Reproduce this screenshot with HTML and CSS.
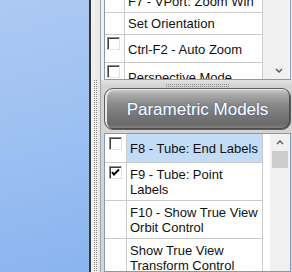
FILE: index.html
```html
<!doctype html>
<html lang="en">
<head>
    <meta charset="utf-8">
    <title>Parametric Models</title>
    <link rel="stylesheet" href="styles.css">
</head>
<body>

<div class="screen">
    <div class="desktop"></div>
    <div class="divider"></div>

    <div class="sash">
        <div class="sash-grip"></div>
    </div>

    <div class="pane">
        <div class="top-section">
            <div class="list list-top">
                <div class="rows rows-scrolled">
                    <div class="row">
                        <div class="cell-check"></div>
                        <div class="cell-text short">F7 - VPort: Zoom Win</div>
                    </div>
                    <div class="row">
                        <div class="cell-check"></div>
                        <div class="cell-text short">Set Orientation</div>
                    </div>
                    <div class="row">
                        <div class="cell-check"><span class="checkbox"></span></div>
                        <div class="cell-text tall">Ctrl-F2 - Auto Zoom</div>
                    </div>
                    <div class="row">
                        <div class="cell-check"><span class="checkbox"></span></div>
                        <div class="cell-text tall">Perspective Mode</div>
                    </div>
                </div>
                <div class="scroll-gap gray"></div>
                <div class="scrollbar scrollbar-end">
                    <div class="scroll-button">
                        <svg viewBox="0 0 8 5" width="8" height="5">
                            <polyline points="1,1 4,4 7,1" fill="none" stroke="#555" stroke-width="1.4"/>
                        </svg>
                    </div>
                </div>
            </div>
        </div>

        <div class="splitter">
            <div class="splitter-grip"></div>
        </div>

        <div class="group">
            <div class="group-header">Parametric Models</div>

            <div class="list list-bottom">
                <div class="rows">
                    <div class="row">
                        <div class="cell-check"><span class="checkbox"></span></div>
                        <div class="cell-text selected">F8 - Tube: End Labels</div>
                    </div>
                    <div class="row">
                        <div class="cell-check">
                            <span class="checkbox">
                                <svg viewBox="0 0 11 11" width="11" height="11">
                                    <polyline points="2,5 4,7.5 9,2.5" fill="none" stroke="#000" stroke-width="2"/>
                                </svg>
                            </span>
                        </div>
                        <div class="cell-text">F9 - Tube: Point Labels</div>
                    </div>
                    <div class="row">
                        <div class="cell-check"></div>
                        <div class="cell-text">F10 - Show True View Orbit Control</div>
                    </div>
                    <div class="row">
                        <div class="cell-check"></div>
                        <div class="cell-text">Show True View Transform Control</div>
                    </div>
                </div>
                <div class="scroll-gap"></div>
                <div class="scrollbar">
                    <div class="scroll-button">
                        <svg viewBox="0 0 8 5" width="8" height="5">
                            <polyline points="1,4 4,1 7,4" fill="none" stroke="#555" stroke-width="1.4"/>
                        </svg>
                    </div>
                    <div class="scroll-thumb"></div>
                </div>
            </div>
        </div>
    </div>
</div>

</body>
</html>
```

FILE: styles.css
```css
body {
    margin: 0;
    font-family: 'Liberation Sans', Arial, sans-serif;
    font-size: 13px;
    line-height: 15px;
    color: #111;
    overflow: hidden;
}

.screen {
    display: flex;
    width: 292px;
    height: 272px;
    overflow: hidden;
}

.desktop {
    width: 89px;
    background: linear-gradient(165deg, #adc9f3 0%, #9cc0f2 50%, #8ab4ef 100%);
}

.divider {
    width: 2px;
    background-color: #353535;
}

/* vertical sash between desktop and side panel */
.sash {
    width: 9px;
    background: linear-gradient(90deg, #f3f3f3, #e6e6e6);
    border-right: 1px solid #a4a4a4;
}

.sash-grip {
    width: 5px;
    height: 200px;
    margin: 80px 0 0 2px;
    background: conic-gradient(#8a8a8a 25%, transparent 0) 0 0 / 2px 2px;
}

.pane {
    flex: 1;
    display: flex;
    flex-direction: column;
    min-width: 0;
}

.top-section {
    padding: 0 1px 0 3px;
    background-color: #f0f0f0;
}

/* lists */
.list {
    display: flex;
    background-color: #fff;
    border: 1px solid #7f9db9;
    overflow: hidden;
    box-sizing: border-box;
}

.list-top {
    height: 80px;
    border-top: 0;
}

.rows {
    display: flex;
    flex-direction: column;
}

.rows-scrolled {
    margin-top: -9px;
}

.row {
    display: flex;
    border-bottom: 1px solid #cbcbcb;
    flex-shrink: 0;
}

.cell-check {
    width: 19px;
    border-right: 1px solid #cbcbcb;
}

.cell-text {
    width: 138px;
    box-sizing: border-box;
    padding: 4px 3px 3px 3px;
    display: flex;
    align-items: center;
    border-right: 1px solid #cbcbcb;
}

.cell-text.short {
    height: 21px;
    padding-top: 2px;
}

.cell-text.tall {
    height: 27px;
}

.checkbox {
    display: block;
    width: 13px;
    height: 13px;
    margin: 2px 0 0 2px;
    box-sizing: border-box;
    background-color: #fff;
    border: 1px solid;
    border-color: #8d8d8d #e2e2e2 #e2e2e2 #8d8d8d;
    box-shadow: inset 1px 1px 0 #404040;
    font-size: 0;
}

.checkbox svg {
    display: block;
}

.scroll-gap {
    width: 6px;
}

.scroll-gap.gray {
    background-color: #f0f0f0;
}

.scrollbar {
    width: 20px;
    display: flex;
    flex-direction: column;
    background-color: #f0f0f0;
}

.scrollbar-end {
    justify-content: flex-end;
}

.scroll-button {
    height: 17px;
    display: flex;
    align-items: center;
    justify-content: center;
}

.scroll-button svg {
    display: block;
}

.scroll-thumb {
    height: 17px;
    margin: 0 2px 0 2px;
    background-color: #cdcdcd;
}

/* horizontal splitter */
.splitter {
    height: 8px;
    background: linear-gradient(#e2e2e2, #cfcfcf);
}

.splitter-grip {
    width: 64px;
    height: 3px;
    margin: 4px auto 0;
    background: conic-gradient(#8a8a8a 25%, transparent 0) 0 0 / 2px 2px;
}

.group {
    flex: 1;
    display: flex;
    flex-direction: column;
    padding: 0 1px 0 3px;
    background-color: #d4d4d4;
    min-height: 0;
}

.group-header {
    height: 42px;
    flex-shrink: 0;
    box-sizing: border-box;
    display: flex;
    align-items: center;
    justify-content: center;
    border: 1px solid #5e5e5e;
    border-radius: 9px;
    background: linear-gradient(#cfcfcf 0%, #a9a9a9 14%, #8a8a8a 38%, #777 65%, #6a6a6a 88%, #888 100%);
    box-shadow: inset 2px 1px 0 #e8e8e8, inset -1px -1px 0 #4c4c4c;
    color: #fff;
    font-size: 17px;
    text-shadow: 0 0 2px #3d5f96;
}

.list-bottom {
    flex: 1;
    margin-top: 3px;
}

.list-bottom .cell-check {
    width: 21px;
}

.list-bottom .checkbox {
    margin: 3px 0 0 4px;
}

.list-bottom .cell-text {
    width: 136px;
    min-height: 28px;
}

.list-bottom .scroll-gap {
    width: 7px;
}

.cell-text.selected {
    background-color: #c2dcf8;
}
```
